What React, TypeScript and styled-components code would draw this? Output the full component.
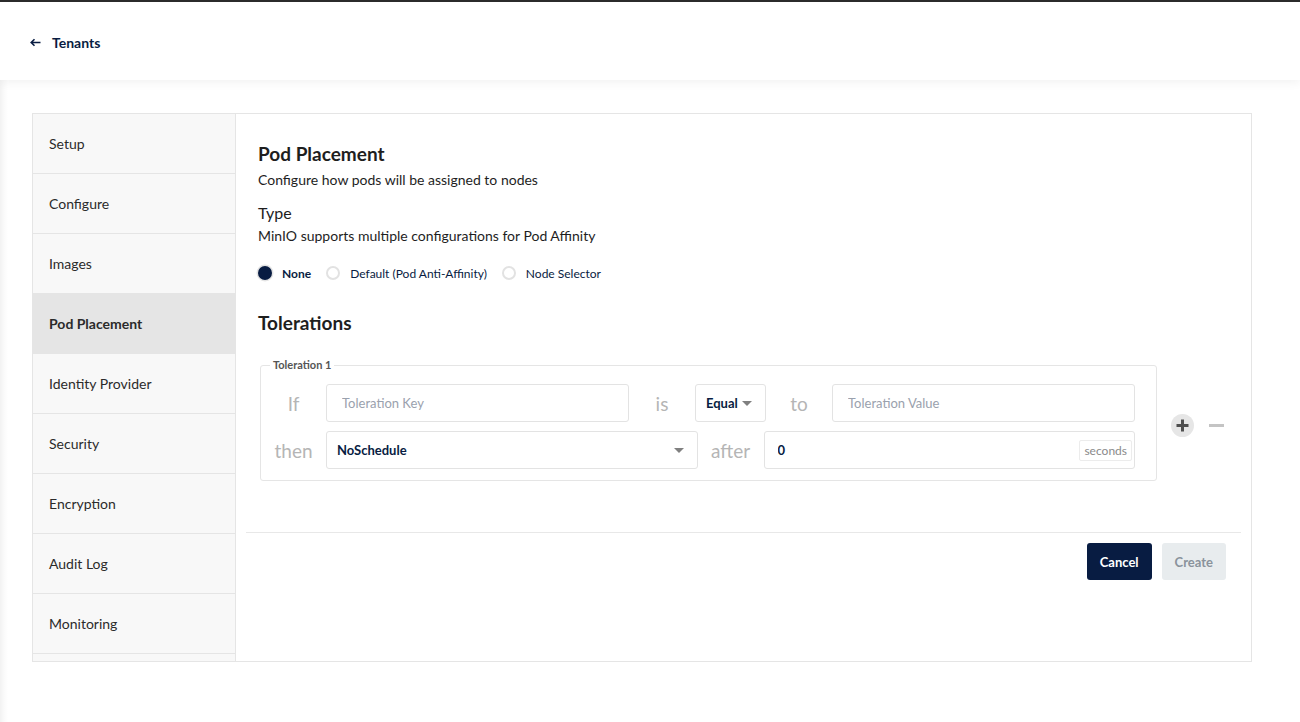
import React from "react";
import styled, { createGlobalStyle } from "styled-components";

const navy = "#081C42";

const Global = createGlobalStyle`
  html, body { margin: 0; padding: 0; background: #fff; }
  body { font-family: Lato, "Noto Sans", "Liberation Sans", sans-serif; color: #2b2b2b; }
  * { box-sizing: border-box; }
`;

const Page = styled.div`
  width: 1300px;
  height: 722px;
  display: flex;
  flex-direction: column;
  overflow: hidden;
  border-top: 2px solid #2b2b2b;
`;

const Header = styled.header`
  position: relative;
  z-index: 1;
  height: 78px;
  flex: none;
  background: #fff;
  display: flex;
  align-items: center;
  padding: 0 0 0 30px;
  box-shadow: 0 3px 9px rgba(0, 0, 0, 0.05);
`;

const BackLink = styled.a`
  display: flex;
  align-items: center;
  gap: 11px;
  font-size: 14px;
  font-weight: 700;
  color: ${navy};
  text-decoration: none;
  margin-top: 3px;
`;

const Main = styled.main`
  flex: 1;
  padding: 33px 48px 0 32px;
  background: linear-gradient(to right, #f2f2f2 0, #fafafa 4px, #fff 8px);
`;

const Card = styled.div`
  height: 549px;
  display: flex;
  border: 1px solid #e5e5e5;
  background: #fff;
`;

const Menu = styled.nav`
  width: 203px;
  flex: none;
  background: #f8f8f8;
  border-right: 1px solid #e5e5e5;
  overflow: hidden;
`;

const MenuItem = styled.div<{ $active?: boolean }>`
  height: 60px;
  display: flex;
  align-items: center;
  padding-left: 16px;
  border-bottom: 1px solid #e5e5e5;
  font-size: 14px;
  font-weight: ${(p) => (p.$active ? 700 : 400)};
  background: ${(p) => (p.$active ? "#e5e5e5" : "transparent")};
  color: #2b2b2b;
  flex: none;
`;

const Panel = styled.section`
  flex: 1;
  display: flex;
  flex-direction: column;
  min-width: 0;
`;

const Content = styled.div`
  padding: 29px 0 0 22px;
  display: flex;
  flex-direction: column;
`;

const Title = styled.h2`
  margin: 0;
  font-size: 19px;
  line-height: 22px;
  font-weight: 700;
  color: #1e1e1e;
`;

const Sub = styled.p<{ $mt: number }>`
  margin: ${(p) => p.$mt}px 0 0;
  font-size: 14px;
  line-height: 18px;
  color: #1e1e1e;
`;

const TypeLabel = styled.div`
  margin-top: 14px;
  font-size: 16px;
  line-height: 20px;
  color: #1e1e1e;
`;

const RadioRow = styled.div`
  margin-top: 13px;
  height: 30px;
  display: flex;
  align-items: center;
`;

const RadioOpt = styled.label`
  display: flex;
  align-items: center;
  gap: 10px;
  margin-right: 15px;
`;

const RadioDot = styled.span<{ $on?: boolean }>`
  width: 14px;
  height: 14px;
  border-radius: 50%;
  flex: none;
  background: ${(p) => (p.$on ? navy : "#fff")};
  border: ${(p) => (p.$on ? "none" : "2px solid #e2e2e2")};
  box-shadow: ${(p) => (p.$on ? "0 0 0 1.5px #e4e4e4" : "none")};
`;

const RadioText = styled.span<{ $on?: boolean }>`
  font-size: 12px;
  font-weight: ${(p) => (p.$on ? 700 : 400)};
  color: ${navy};
`;

const Section = styled.h3`
  margin: 24px 0 0;
  font-size: 19px;
  line-height: 22px;
  font-weight: 700;
  color: #1e1e1e;
`;

const TolWrap = styled.div`
  margin: 24px 0 0 2px;
  display: flex;
  align-items: center;
`;

const Fieldset = styled.fieldset`
  margin: 0;
  width: 897px;
  flex: none;
  min-width: 0;
  border: 1px solid #e5e5e5;
  border-radius: 3px;
  padding: 12px 21px 11px 0;
  display: flex;
  flex-direction: column;
  gap: 9px;
`;

const Legend = styled.legend`
  margin-left: 9px;
  padding: 0 3px;
  font-size: 11px;
  line-height: 14px;
  font-weight: 700;
  color: #555;
`;

const Row = styled.div`
  display: flex;
  align-items: center;
  height: 38px;
`;

const Word = styled.span<{ $w: number }>`
  width: ${(p) => p.$w}px;
  flex: none;
  text-align: center;
  font-size: 19px;
  color: #b5b5b5;
`;

const Input = styled.input`
  flex: 1 1 0;
  min-width: 0;
  height: 38px;
  border: 1px solid #e3e3e3;
  border-radius: 3px;
  padding: 0 15px;
  font-family: inherit;
  font-size: 13px;
  color: ${navy};
  outline: none;
  &::placeholder { color: #9aa1ad; }
`;

const Select = styled.div<{ $w?: number }>`
  ${(p) => (p.$w ? `width: ${p.$w}px; flex: none;` : "flex: 1 1 0; min-width: 0;")}
  height: 38px;
  border: 1px solid #e3e3e3;
  border-radius: 3px;
  display: flex;
  align-items: center;
  justify-content: space-between;
  padding: 0;
  font-size: 13px;
  font-weight: 700;
  color: ${navy};
`;

const SelText = styled.span`
  margin-left: 10px;
`;

const Caret = styled.span`
  width: 0;
  height: 0;
  margin-right: 13px;
  border-left: 5px solid transparent;
  border-right: 5px solid transparent;
  border-top: 5px solid #808080;
`;

const NumBox = styled.div`
  flex: 1 1 0;
  min-width: 0;
  height: 38px;
  border: 1px solid #e3e3e3;
  border-radius: 3px;
  display: flex;
  align-items: center;
  padding: 0;
`;

const NumInput = styled.input`
  flex: 1;
  min-width: 0;
  border: none;
  outline: none;
  padding: 0 0 0 13px;
  font-family: inherit;
  font-size: 13px;
  font-weight: 700;
  color: ${navy};
`;

const Adorn = styled.span`
  margin-right: 2px;
  border: 1px solid #ececec;
  border-radius: 2px;
  padding: 2px 4px;
  font-size: 12px;
  color: #8a8a8a;
`;

const Actions = styled.div`
  margin: 11px 0 0 14px;
  display: flex;
  align-items: center;
  gap: 15px;
`;

const CircleBtn = styled.span`
  width: 23px;
  height: 23px;
  border-radius: 50%;
  background: #e6e6e6;
  display: flex;
  align-items: center;
  justify-content: center;
`;

const Footer = styled.div`
  margin: 51px 10px 0 10px;
  border-top: 1px solid #e8e8e8;
  padding: 10px 15px 0 0;
  display: flex;
  justify-content: flex-end;
  gap: 10px;
`;

const Button = styled.button<{ $primary?: boolean }>`
  height: 37px;
  padding: 0 13px;
  border: none;
  border-radius: 3px;
  font-family: inherit;
  font-size: 13px;
  font-weight: 700;
  background: ${(p) => (p.$primary ? navy : "#e8ecee")};
  color: ${(p) => (p.$primary ? "#fff" : "#8a939c")};
`;

const items = [
  "Setup",
  "Configure",
  "Images",
  "Pod Placement",
  "Identity Provider",
  "Security",
  "Encryption",
  "Audit Log",
  "Monitoring",
  "",
];

export default function App() {
  return (
    <Page>
      <Global />
      <Header>
        <BackLink href="#">
          <svg width="11" height="9" viewBox="0 0 11 9">
            <path d="M10.5 4.5H1.5M4.5 1.2L1.2 4.5L4.5 7.8" stroke={navy} strokeWidth="1.6" fill="none" />
          </svg>
          Tenants
        </BackLink>
      </Header>
      <Main>
        <Card>
          <Menu>
            {items.map((it, i) => (
              <MenuItem key={i} $active={it === "Pod Placement"}>
                {it}
              </MenuItem>
            ))}
          </Menu>
          <Panel>
            <Content>
              <Title>Pod Placement</Title>
              <Sub $mt={6}>Configure how pods will be assigned to nodes</Sub>
              <TypeLabel>Type</TypeLabel>
              <Sub $mt={4}>MinIO supports multiple configurations for Pod Affinity</Sub>
              <RadioRow>
                <RadioOpt>
                  <RadioDot $on />
                  <RadioText $on>None</RadioText>
                </RadioOpt>
                <RadioOpt>
                  <RadioDot />
                  <RadioText>Default (Pod Anti-Affinity)</RadioText>
                </RadioOpt>
                <RadioOpt>
                  <RadioDot />
                  <RadioText>Node Selector</RadioText>
                </RadioOpt>
              </RadioRow>
              <Section>Tolerations</Section>
              <TolWrap>
                <Fieldset>
                  <Legend>Toleration 1</Legend>
                  <Row>
                    <Word $w={65}>If</Word>
                    <Input placeholder="Toleration Key" />
                    <Word $w={66}>is</Word>
                    <Select $w={71}>
                      <SelText>Equal</SelText>
                      <Caret />
                    </Select>
                    <Word $w={66}>to</Word>
                    <Input placeholder="Toleration Value" />
                  </Row>
                  <Row>
                    <Word $w={65}>then</Word>
                    <Select>
                      <SelText>NoSchedule</SelText>
                      <Caret />
                    </Select>
                    <Word $w={66}>after</Word>
                    <NumBox>
                      <NumInput defaultValue="0" />
                      <Adorn>seconds</Adorn>
                    </NumBox>
                  </Row>
                </Fieldset>
                <Actions>
                  <CircleBtn>
                    <svg width="13" height="13" viewBox="0 0 13 13">
                      <path d="M6.5 0.5V12.5M0.5 6.5H12.5" stroke="#4f4f4f" strokeWidth="3" />
                    </svg>
                  </CircleBtn>
                  <svg width="15" height="3" viewBox="0 0 15 3">
                    <rect width="15" height="3" fill="#c4c4c4" />
                  </svg>
                </Actions>
              </TolWrap>
            </Content>
            <Footer>
              <Button $primary>Cancel</Button>
              <Button disabled>Create</Button>
            </Footer>
          </Panel>
        </Card>
      </Main>
    </Page>
  );
}
